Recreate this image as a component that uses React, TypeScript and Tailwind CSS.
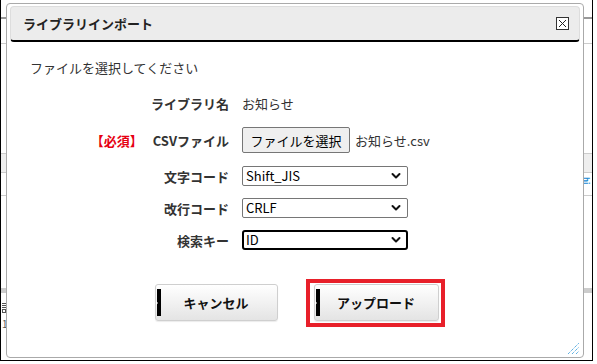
import { useState } from "react"

const font = { fontFamily: '"Noto Sans CJK JP", "Noto Sans", sans-serif' }

function Chevron() {
  return (
    <svg className="pointer-events-none absolute right-[7px] top-1/2 -translate-y-1/2" width="10" height="7" viewBox="0 0 10 7">
      <path d="M1.5 1.5 L5 5 L8.5 1.5" fill="none" stroke="#111" strokeWidth="2" strokeLinecap="round" strokeLinejoin="round" />
    </svg>
  )
}

function Select({ value, options, focused }: { value: string; options: string[]; focused?: boolean }) {
  const [v, setV] = useState(value)
  return (
    <div className="relative w-[166px] h-[20px]">
      <select
        value={v}
        onChange={(e) => setV(e.target.value)}
        className={`appearance-none w-full h-full bg-white text-[13px] leading-[16px] text-black outline-none ${
          focused ? "border-2 border-black rounded-[3px] pl-[2px]" : "border border-[#767676] rounded-[2px] pl-[3px]"
        }`}
        style={font}
      >
        {options.map((o) => (
          <option key={o}>{o}</option>
        ))}
      </select>
      <Chevron />
    </div>
  )
}

function ActionButton({ label, w }: { label: string; w: string }) {
  return (
    <button
      className={`relative ${w} h-[37px] border border-[#cfcfcf] rounded-[3px] bg-gradient-to-b from-white to-[#e4e4e4] shadow-[0_1px_1px_rgba(0,0,0,0.08)] text-[13px] font-bold text-[#111] flex items-center justify-center`}
    >
      <span className="absolute left-[1px] top-[4px] bottom-[4px] w-[4px] bg-black" />
      <span className="absolute left-0 top-1/2 -translate-y-1/2 w-0 h-0 border-y-[2px] border-y-transparent border-l-[2px] border-l-white" />
      {label}
    </button>
  )
}

export default function App() {
  return (
    <div className="relative w-[597px] h-[364px] bg-white overflow-hidden text-[#333]" style={font}>
      {/* page behind the dialog */}
      <div className="absolute left-0 top-0 w-[593px] h-[361px] border-l border-r border-b border-black">
        <div className="absolute left-0 top-[17px] w-[6px] h-[2px] bg-[#999]" />
        <div className="absolute right-0 top-[17px] w-[8px] h-[2px] bg-[#999]" />
        <div className="absolute left-0 top-[43px] w-[6px] h-px bg-[#ccc]" />
        <div className="absolute right-0 top-[43px] w-[8px] h-px bg-[#ccc]" />
        <div className="absolute left-0 top-[153px] w-[6px] h-[20px] bg-[#eee] border-y border-[#ccc]" />
        <div className="absolute right-0 top-[153px] w-[8px] h-[20px] bg-[#eee] border-y border-[#ccc]" />
        <div className="absolute right-[1px] top-[177px] text-[8px] leading-[9px] font-bold text-[#1a8ad4] [writing-mode:vertical-rl]">hi</div>
        <div className="absolute left-0 top-[195px] w-[6px] h-px bg-[#ccc]" />
        <div className="absolute right-0 top-[195px] w-[8px] h-px bg-[#ccc]" />
        <div className="absolute left-0 top-[288px] w-[6px] h-[5px] bg-[#ccc]" />
        <div className="absolute right-0 top-[288px] w-[8px] h-[5px] bg-[#ccc]" />
        <div className="absolute left-[1px] top-[303px] w-[4px] h-[11px] flex flex-col gap-[1px]">
          <span className="h-px bg-[#555]" />
          <span className="h-px bg-[#555]" />
          <span className="h-px bg-[#555]" />
          <span className="h-[4px] border border-[#555]" />
        </div>
        <div className="absolute left-[1px] top-[318px] text-[10px] leading-[12px] text-[#555]">1</div>
      </div>

      {/* dialog */}
      <div className="absolute left-[6px] top-[3px] w-[578px] h-[355px] border border-[#aaa] rounded-[4px] bg-white px-[3px] pt-[2px] flex flex-col">
        <div className="h-[36px] bg-[#ececec] border border-[#ddd] border-b-2 border-b-black rounded-[4px] flex items-center justify-between pl-[12px] pr-[10px]">
          <span className="text-[13px] leading-[19px] font-bold text-[#222]">ライブラリインポート</span>
          <span className="w-[13px] h-[13px] border border-[#333] bg-white flex items-center justify-center">
            <svg width="9" height="9" viewBox="0 0 9 9">
              <path d="M1 1 L8 8 M8 1 L1 8" stroke="#222" strokeWidth="1" />
            </svg>
          </span>
        </div>

        <p className="mt-[16px] pl-[20px] text-[13px] leading-[19px] text-[#333]">ファイルを選択してください</p>

        <div className="mt-[10px] flex flex-col text-[13px] leading-[19px]">
          <div className="h-[33px] flex items-center gap-[13px]">
            <div className="w-[219px] text-right font-bold">ライブラリ名</div>
            <div>お知らせ</div>
          </div>
          <div className="h-[40px] flex items-center gap-[13px]">
            <div className="w-[219px] flex justify-end font-bold">
              <span className="text-[#e60012] mr-[10px]">【必須】</span>
              <span>CSVファイル</span>
            </div>
            <div className="flex items-center">
              <button className="w-[108px] h-[26px] bg-[#efefef] border border-[#767676] rounded-[2px] text-[13px] text-black">
                ファイルを選択
              </button>
              <span className="ml-[5px]">お知らせ.csv</span>
            </div>
          </div>
          <div className="h-[32px] flex items-center gap-[13px]">
            <div className="w-[219px] text-right font-bold">文字コード</div>
            <Select value="Shift_JIS" options={["Shift_JIS", "UTF-8", "EUC-JP"]} />
          </div>
          <div className="h-[32px] flex items-center gap-[13px]">
            <div className="w-[219px] text-right font-bold">改行コード</div>
            <Select value="CRLF" options={["CRLF", "LF", "CR"]} />
          </div>
          <div className="h-[32px] flex items-center gap-[13px]">
            <div className="w-[219px] text-right font-bold">検索キー</div>
            <Select value="ID" options={["ID", "名前"]} focused />
          </div>
        </div>

        <div className="mt-[28px] pl-[3px] flex justify-center gap-[36px]">
          <ActionButton label="キャンセル" w="w-[123px]" />
          <div className="relative">
            <ActionButton label="アップロード" w="w-[125px]" />
            <div className="absolute -left-[8px] -top-[5px] -right-[6px] -bottom-[6px] border-4 border-[#e8202a] pointer-events-none" />
          </div>
        </div>

        {/* resize handle */}
        <svg className="absolute right-[3px] bottom-[2px]" width="13" height="13" viewBox="0 0 13 13">
          <path d="M1 12 L12 1 M5 12 L12 5 M9 12 L12 9" stroke="#1c8fd6" strokeWidth="1" strokeDasharray="1 1" />
        </svg>
      </div>
    </div>
  )
}
